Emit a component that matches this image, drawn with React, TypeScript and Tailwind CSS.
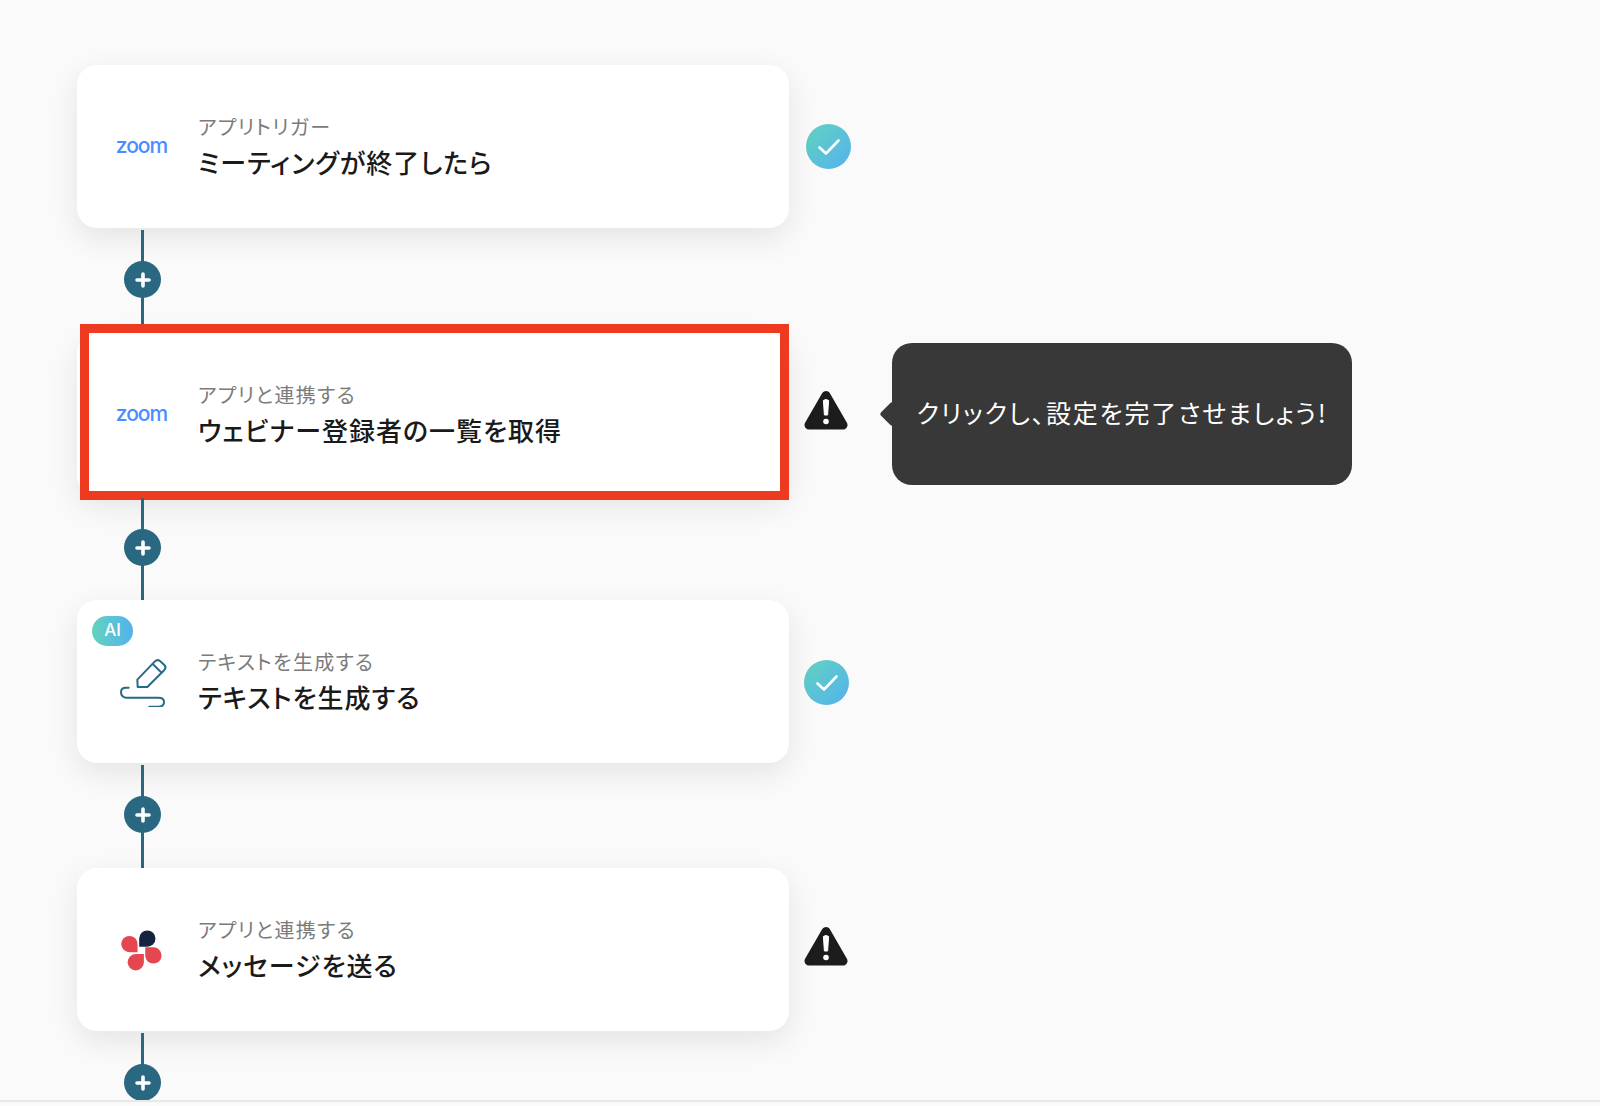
import type { ReactNode } from "react";

const FONT = "font-['Noto_Sans_CJK_JP','Noto_Sans',sans-serif]";

function ZoomLogo() {
  return (
    <span className="mb-[2px] font-['Inter',sans-serif] text-[21px] font-medium leading-none tracking-[-1px] text-[#4a8cff]">
      zoom
    </span>
  );
}

function PenIcon() {
  return (
    <svg className="ml-[6px]" width="50" height="50" viewBox="0 0 150 150" fill="none" stroke="#2a6a88" strokeWidth="6" strokeLinecap="round" strokeLinejoin="round">
      <path d="M53 90 L52 68 L104 14 Q112 6 120 12 L133 24 Q140 31 133 39 L82 90 Z" />
      <path d="M98 21 L125 47" />
      <path d="M26 92 H18 Q3 92 3 105 Q3 120 18 122 H115 Q132 122 132 135 Q132 149 115 149 H88" />
    </svg>
  );
}

function ChatworkLogo() {
  return (
    <svg className="ml-[15px]" width="100" height="80" viewBox="0 0 100 80">
      <path fill="#14233f" d="M40 36.6 V28.3 A8.3 8.3 0 1 1 48.3 36.6 Z" />
      <path fill="#e4474f" d="M38.3 42.3 H30 A8.3 8.3 0 1 1 38.3 34 Z" />
      <path fill="#e4474f" d="M46.2 37.2 H54.5 A8.3 8.3 0 1 1 46.2 45.5 Z" />
      <path fill="#e4474f" d="M44.8 44.2 V52.5 A8.3 8.3 0 1 1 36.5 44.2 Z" />
    </svg>
  );
}

function CheckBadge() {
  return (
    <div className="flex size-[45px] items-center justify-center rounded-full bg-gradient-to-br from-[#64d2bd] to-[#55b1ee]">
      <svg width="24" height="24" viewBox="0 0 24 24" fill="none" stroke="#fff" strokeWidth="2.6" strokeLinecap="round" strokeLinejoin="round">
        <path d="M2.5 12.5 L9 18.5 L21.5 5.5" />
      </svg>
    </div>
  );
}

function WarningBadge() {
  return (
    <svg width="44" height="40" viewBox="0 0 44 40">
      <path d="M22 5.5 L39 35 H5 Z" fill="#1c1c1c" stroke="#1c1c1c" strokeWidth="9" strokeLinejoin="round" />
      <path d="M19.4 10.5 Q22 8.5 24.6 10.5 L23.6 25 H20.4 Z" fill="#fff" stroke="#fff" strokeWidth="1" strokeLinejoin="round" />
      <circle cx="22" cy="31.5" r="2.8" fill="#fff" />
    </svg>
  );
}

function Connector({ short }: { short?: boolean }) {
  return (
    <div className={`relative ml-[47px] flex w-[37px] justify-center pt-[2px] ${short ? "h-[104px]" : "h-[105px]"}`}>
      <div className="h-full w-[3px] bg-[#2a6781]" />
      <div className="absolute left-0 top-[33px] flex size-[37px] items-center justify-center rounded-full bg-[#2a6781]">
        <svg width="18" height="18" viewBox="0 0 18 18" stroke="#fff" strokeWidth="3.6" strokeLinecap="round">
          <path d="M9 3 V15 M3 9 H15" />
        </svg>
      </div>
    </div>
  );
}

type StepProps = {
  badge?: boolean;
  icon: ReactNode;
  label: string;
  status: ReactNode;
  statusClass: string;
  title: string;
};

function Step({ badge, icon, label, status, statusClass, title }: StepProps) {
  return (
    <div className="flex items-center">
      <div className="relative flex h-[163px] w-[712px] items-center rounded-[20px] bg-white shadow-[0_10px_30px_rgba(0,0,0,0.09)]">
        {badge ? (
          <span className="absolute left-[15px] top-[16px] flex h-[30px] w-[41px] items-center justify-center rounded-full bg-gradient-to-r from-[#64d2bd] to-[#55b1ee] font-['Inter',sans-serif] text-[17px] font-medium text-white">
            AI
          </span>
        ) : null}
        <div className="flex w-[121px] shrink-0 justify-center pl-[8px]">{icon}</div>
        <div className="flex flex-col [font-feature-settings:'palt']">
          <span className="mt-[-1px] text-[20px] leading-[28px] tracking-[1.35px] text-[#7b7b7b]">{label}</span>
          <span className="mt-[3px] text-[26px] font-medium leading-[36px] tracking-[1px] text-[#1a1a1a]">{title}</span>
        </div>
      </div>
      <div className={statusClass}>{status}</div>
    </div>
  );
}

export default function App() {
  return (
    <div className={`${FONT} h-[1106px] w-[1600px] overflow-hidden bg-[#fafafa]`}>
      <div className="relative h-[1100px] overflow-hidden pl-[77px] pt-[65px]">
        <Step
          icon={<ZoomLogo />}
          label="アプリトリガー"
          status={<CheckBadge />}
          statusClass="ml-[17px]"
          title="ミーティングが終了したら"
        />
        <Connector />
        <div className="relative">
          <Step
            icon={<ZoomLogo />}
            label="アプリと連携する"
            status={<WarningBadge />}
            statusClass="mb-[9px] ml-[15px]"
            title="ウェビナー登録者の一覧を取得"
          />
          {/* red highlight drawn over the card */}
          <div className="absolute left-[3px] top-[-9px] h-[176px] w-[709px] border-[9px] border-[#ee3a20]" />
          <div className="absolute left-[815px] top-[10px] flex h-[142px] w-[460px] items-center justify-center rounded-[20px] bg-[#383838] text-[25px] leading-none tracking-[1.8px] text-white [font-feature-settings:'palt']">
            <span className="absolute left-[-9px] top-[62px] size-[18px] rotate-45 rounded-[3px] bg-[#383838]" />
            <span className="relative mt-[-4px]">クリックし、設定を完了させましょう!</span>
          </div>
        </div>
        <Connector short />
        <Step
          badge
          icon={<PenIcon />}
          label="テキストを生成する"
          status={<CheckBadge />}
          statusClass="mt-[2px] ml-[15px]"
          title="テキストを生成する"
        />
        <Connector />
        <Step
          icon={<ChatworkLogo />}
          label="アプリと連携する"
          status={<WarningBadge />}
          statusClass="mb-[8px] ml-[15px]"
          title="メッセージを送る"
        />
        <Connector />
      </div>
      <div className="h-[6px] border-t-2 border-[#e8e8e8] bg-[#fafafa]" />
    </div>
  );
}
